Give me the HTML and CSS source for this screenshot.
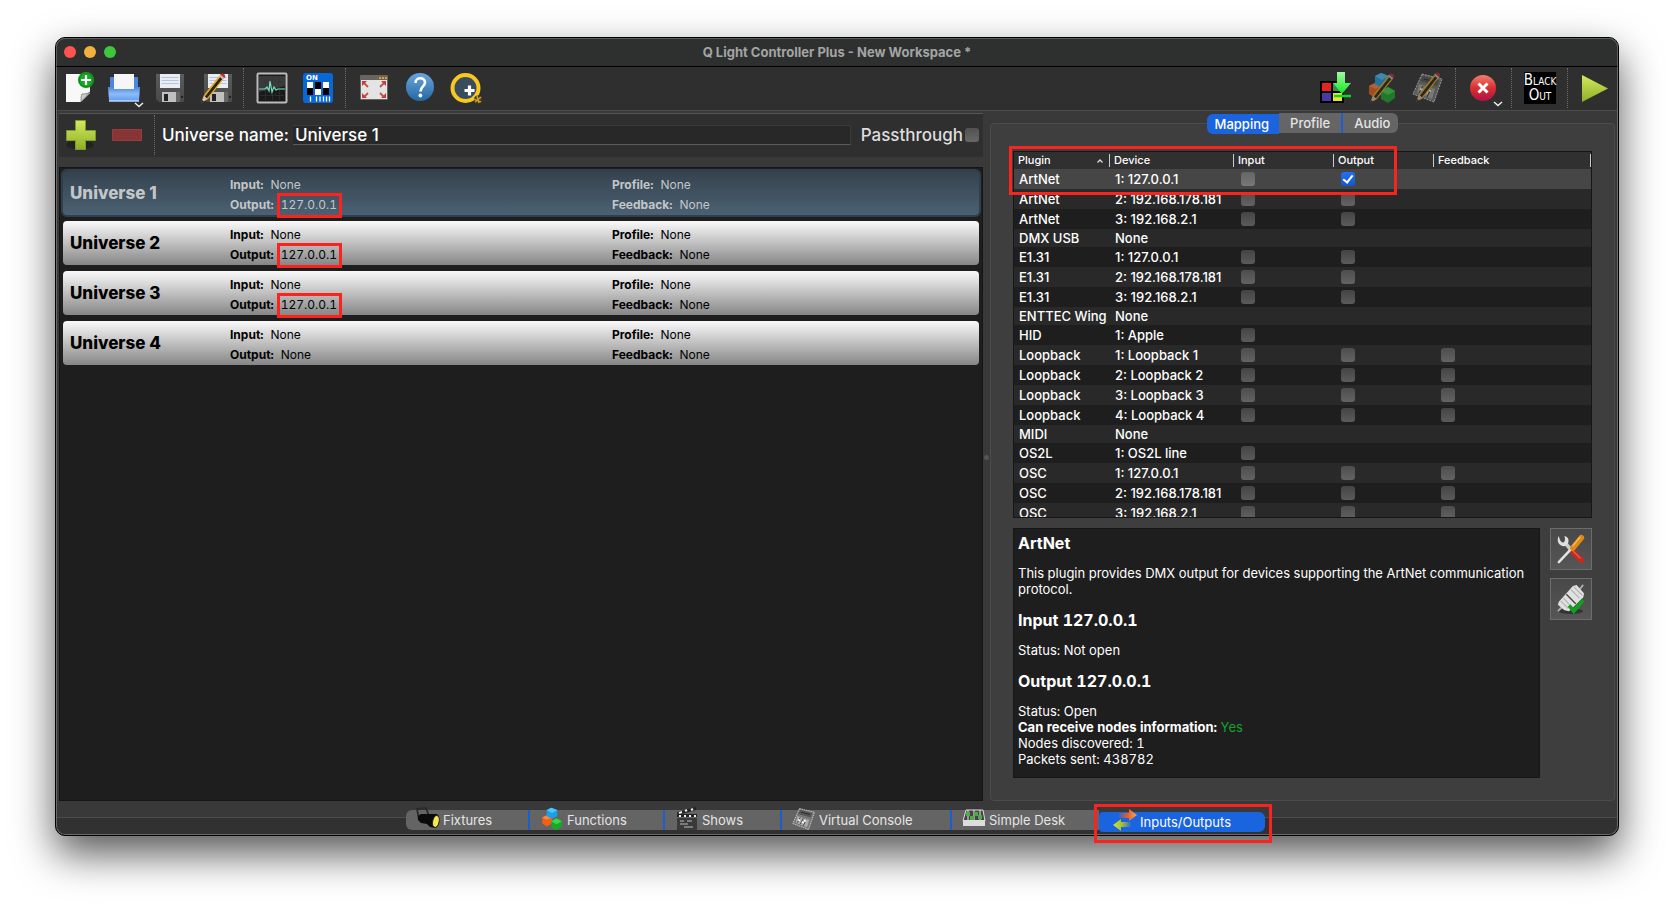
FILE: index.html
```html
<!DOCTYPE html>
<html lang="en">
<head>
<meta charset="utf-8">
<title>Q Light Controller Plus - New Workspace *</title>
<link rel="stylesheet" href="styles.css">
</head>
<body>
<svg class="defs" width="0" height="0" aria-hidden="true">
  <defs>
    <linearGradient id="gBlue" x2="0" y2="1"><stop offset="0" stop-color="#4a86dc"/><stop offset=".5" stop-color="#8ebcf8"/><stop offset="1" stop-color="#5e9cf0"/></linearGradient>
    <linearGradient id="gGray" x2="0" y2="1"><stop offset="0" stop-color="#5c5c5c"/><stop offset="1" stop-color="#484848"/></linearGradient>
    <linearGradient id="gHelp" x2="0" y2="1"><stop offset="0" stop-color="#6aa6dc"/><stop offset="1" stop-color="#2468a4"/></linearGradient>
    <linearGradient id="gLime" x2="0" y2="1"><stop offset="0" stop-color="#d4e85c"/><stop offset="1" stop-color="#8cb02a"/></linearGradient>
    <linearGradient id="gRed" x2="0" y2="1"><stop offset="0" stop-color="#f08070"/><stop offset=".5" stop-color="#d83030"/><stop offset="1" stop-color="#b01048"/></linearGradient>
    <linearGradient id="gArrow" x2="0" y2="1"><stop offset="0" stop-color="#a0f8a0"/><stop offset="1" stop-color="#10e820"/></linearGradient>
    <linearGradient id="gOrange"><stop offset="0" stop-color="#e85a20" stop-opacity=".2"/><stop offset=".5" stop-color="#e86028"/><stop offset="1" stop-color="#f0a860"/></linearGradient>
    <linearGradient id="gGreen"><stop offset="0" stop-color="#d0e040"/><stop offset=".5" stop-color="#a8c030"/><stop offset="1" stop-color="#a8c030" stop-opacity=".1"/></linearGradient>
    <g id="floppy">
      <path d="M1 1h28v28H4l-3-3z" fill="url(#gGray)"/><path d="M5 1h20v14H5z" fill="#e8edf4"/>
      <path d="M6.500 4.500h17M6.500 7.500h17M6.500 10.500h17" stroke="#b4c4dc"/>
      <path d="M7 19h14v10H7z" fill="#c0c0c0"/><path d="M9 21h4v7H9z" fill="#222"/><path d="M21 19h4v10h-4z" fill="#666"/><path d="M26 23h2v2h-2z" fill="#222"/>
    </g>
    <g id="pencil">
      <path d="M1 30l3-8 4 4z" fill="#e0c090"/><path d="M1 30l1-3 2 1.500z" fill="#222"/>
      <path d="M4 22L19 3l4 4L8 26z" fill="#e8a818"/><path d="M5.500 23.500l15-19 1.300 1.300-15 19z" fill="#222" stroke="#222"/>
      <path d="M19 3l1-1.500 4.500 3.500-1.500 2z" fill="#bbb"/><path d="M20 1.500C22-1 27 2 24.500 5z" fill="#c82828"/>
    </g>
    <g id="hexes">
      <path d="M8 11l7 3v8l-7 4-6-4v-8z" fill="#f06018"/><path d="M8 11l7 3-7 3-6-3z" fill="#fc8840"/>
      <path d="M21 15l7 4v7l-7 5-7-4v-8z" fill="#18a828"/><path d="M21 15l7 4-7 4-7-4z" fill="#38d848"/>
      <path d="M14 1l8 3v8l-7 4-7-4V4z" fill="#18a0e8"/><path d="M14 1l8 3-7 4-7-4z" fill="#50c4fc"/>
    </g>
    <g id="desk">
      <path d="M10 2l20 5-8 23-21-8z" fill="#777" stroke="#ddd" stroke-dasharray="2 1"/>
      <path d="M11 4l16 4-2 6L8 9z" fill="#555"/><path d="M7 12l16 5-3 10-15-6z" fill="#aaa"/>
      <path d="M11 14l-4 7M15 15l-4 8M19 17l-4 8M12 7l12 3" stroke="#222"/><path d="M8 17l3 1M13 20l3 1M16 18l3 1" stroke="#fff" stroke-width="2"/>
    </g>
  </defs>
</svg>

<main class="window">
  <header class="titlebar">
    <div class="lights"><button class="light red" aria-label="Close"></button><button class="light amber" aria-label="Minimize"></button><button class="light green" aria-label="Zoom"></button></div>
    <h1 class="title">Q Light Controller Plus - New Workspace *</h1>
  </header>

  <nav class="toolbar" aria-label="Main toolbar">
    <button class="tool" aria-label="New"><svg viewBox="0 0 32 32"><path d="M4 2h24v19l-9 9H4z" fill="#f8f8f8"/><path d="M28 20l-9 10c0-4 0-6 1-8 2 0 5 0 8-2z" fill="#ccc" stroke="#555" stroke-width=".6"/><circle cx="24" cy="8" r="8" fill="#18a828"/><circle cx="24" cy="8" r="7" fill="none" stroke="#0c8418"/><path d="M24 3v10M19 8h10" stroke="#fff" stroke-width="2.200"/></svg></button>
    <button class="tool" aria-label="Open"><svg viewBox="0 0 32 32"><path d="M2 5h28v14H2z" fill="#4a86dc"/><path d="M6 2h20v16H6z" fill="#f6f6f6"/><path d="M0 15h4l2 2h20l2-2h4l-1 14H1z" fill="url(#gBlue)"/><path d="M1 29h30" stroke="#bcd8ff" stroke-width="1.500"/><path d="M27 31l4 3.500 4-3.500" stroke="#eee" fill="none" stroke-width="1.500"/></svg></button>
    <button class="tool" aria-label="Save"><svg viewBox="0 0 32 32"><use href="#floppy" x="1" y="1"/></svg></button>
    <button class="tool" aria-label="Save as"><svg viewBox="0 0 32 32"><use href="#floppy" x="3" y="1"/><use href="#pencil" y="1"/></svg></button>
    <span class="sep"></span>
    <button class="tool" aria-label="Monitor"><svg viewBox="0 0 32 32"><rect x="1.500" y="1.500" width="29" height="29" rx="1" fill="#1a1a1a" stroke="#bbb" stroke-width="2"/><path d="M3 4h26v10L3 20z" fill="#3a3a3a"/><path d="M4 9.500h24M4 16.500h24M4 23.500h24M9.500 4v24M16.500 4v24M23.500 4v24" stroke="#2c3a36" stroke-width=".6"/><path d="M3 17h6l2-2 2 4 1-10 2 11 2-5 2 3 2-1h7" fill="none" stroke="#78dcc0" stroke-width="1.200"/></svg></button>
    <button class="tool" aria-label="DMX address tool"><svg viewBox="0 0 32 32"><rect x="1" y="1" width="30" height="30" rx="3" fill="#0868d8"/><text x="4" y="8" class="dip">ON</text><path d="M5 10h6v13H5zM13 10h6v13h-6zM21 10h6v13h-6z" fill="#fff"/><path d="M5 16h6v7H5zM13 10h6v7h-6zM21 16h6v7h-6z" fill="#000"/><path d="M8.500 24.500v5M14.500 24.500v5M18 24.500v5M21.500 24.500v5M24.500 24.500v5M27.500 24.500v5" stroke="#fff" stroke-width="1.300"/></svg></button>
    <span class="sep"></span>
    <button class="tool" aria-label="Full screen"><svg viewBox="0 0 32 32"><rect x="2" y="3" width="28" height="25" rx="1" fill="#6a6460"/><path d="M3 8h26v19H3z" fill="#e4e4e4"/><path d="M21 6h2M24 6h2M27 6h2" stroke="#e0a030" stroke-width="2"/><g stroke="#c85050" stroke-width="1.800"><path d="M10 15L6 11M22 15l4-4M10 21l-4 4M22 21l4 4"/></g><g fill="#c04040"><path d="M4 9h5l-5 5zM28 9h-5l5 5zM4 26h5l-5-5zM28 26h-5l5-5z"/></g></svg></button>
    <button class="tool" aria-label="Help"><svg viewBox="0 0 32 32"><circle cx="16" cy="15" r="14" fill="url(#gHelp)"/><path d="M11.500 11C11.500 4.500 21 5 21 10.500c0 4-4.500 4-4.500 9" fill="none" stroke="#fff" stroke-width="2.600"/><circle cx="16.400" cy="23.500" r="1.900" fill="#fff"/></svg></button>
    <button class="tool" aria-label="About QLC+"><svg viewBox="0 0 32 32"><circle cx="15.500" cy="16" r="13" fill="#384c5c" stroke="#f8c820" stroke-width="4"/><path d="M19.500 13.500v10M14.500 18.500h10" stroke="#fff" stroke-width="3.200"/><circle cx="28" cy="27.500" r="4" fill="#4a4228"/><path d="M24 27l7 3M25 30l6-5M27 24l2 7" stroke="#d0a828" stroke-width="1.300"/></svg></button>
    <span class="spacer"></span>
    <button class="tool" aria-label="Dump DMX values"><svg viewBox="0 0 32 32"><path d="M0 9h24v22H0z" fill="#000"/><path d="M2 11h9v8H2z" fill="#e82020"/><path d="M13 11h9v8h-9z" fill="#3a9040"/><path d="M2 21h9v8H2z" fill="#4838a8"/><path d="M13 21h9v8h-9z" fill="#f0e030"/><path d="M17 0h8v11h6l-9 11-9-11h4z" fill="url(#gArrow)"/><path d="M14 24h17" stroke="#10d820" stroke-width="2.500"/></svg></button>
    <button class="tool dim" aria-label="Function wizard"><svg viewBox="0 0 32 32"><use href="#hexes" x="1"/><use href="#pencil" x="3" y="1"/></svg></button>
    <button class="tool dim" aria-label="Live edit virtual console"><svg viewBox="0 0 32 32"><use href="#desk"/><use href="#pencil" x="3"/></svg></button>
    <span class="sep"></span>
    <button class="tool" aria-label="Stop all functions"><svg viewBox="0 0 32 32"><circle cx="15" cy="16" r="13" fill="url(#gRed)"/><path d="M10.500 11.500l9 9M19.500 11.500l-9 9" stroke="#fff" stroke-width="3"/><path d="M26 30l4 3.500 4-3.500" stroke="#eee" fill="none" stroke-width="1.500"/></svg></button>
    <span class="sep"></span>
    <button class="tool" aria-label="Blackout"><svg viewBox="0 0 32 32"><rect width="32" height="32" fill="#000"/><text x="16" y="13" class="bo">B<tspan class="sc">LACK</tspan></text><text x="16" y="28" class="bo">O<tspan class="sc">UT</tspan></text></svg></button>
    <span class="sep"></span>
    <button class="tool" aria-label="Operate"><svg viewBox="0 0 32 32"><path d="M2 3l26 13.500L2 30z" fill="url(#gLime)"/></svg></button>
  </nav>

  <div class="content">
    <section class="left" aria-label="Universes">
      <div class="unibar">
        <button class="tool" aria-label="Add universe"><svg viewBox="0 0 32 32"><ellipse cx="15" cy="26" rx="14" ry="4" fill="#222"/><path d="M10.500 1.500h10v10h10v10h-10v9h-10v-9h-9v-10h9z" fill="url(#gLime)" stroke="#7c9c28"/></svg></button>
        <button class="tool" aria-label="Remove universe"><svg viewBox="0 0 32 32"><path d="M1.500 10.500h29v11h-29z" fill="#883434" stroke="#963c3c"/></svg></button>
        <span class="sep"></span>
        <label class="uname" for="uname">Universe name:</label>
        <input class="ufield" id="uname" type="text" value="Universe 1">
        <label class="pass" for="pass">Passthrough</label>
        <input class="check" id="pass" type="checkbox">
      </div>
      <div class="unilist">
        <article class="uni selected"><h2>Universe 1</h2>
          <dl><div><dt>Input:</dt><dd>None</dd></div><div><dt>Output:</dt><dd class="marked">127.0.0.1</dd></div></dl>
          <dl><div><dt>Profile:</dt><dd>None</dd></div><div><dt>Feedback:</dt><dd>None</dd></div></dl></article>
        <article class="uni"><h2>Universe 2</h2>
          <dl><div><dt>Input:</dt><dd>None</dd></div><div><dt>Output:</dt><dd class="marked">127.0.0.1</dd></div></dl>
          <dl><div><dt>Profile:</dt><dd>None</dd></div><div><dt>Feedback:</dt><dd>None</dd></div></dl></article>
        <article class="uni"><h2>Universe 3</h2>
          <dl><div><dt>Input:</dt><dd>None</dd></div><div><dt>Output:</dt><dd class="marked">127.0.0.1</dd></div></dl>
          <dl><div><dt>Profile:</dt><dd>None</dd></div><div><dt>Feedback:</dt><dd>None</dd></div></dl></article>
        <article class="uni"><h2>Universe 4</h2>
          <dl><div><dt>Input:</dt><dd>None</dd></div><div><dt>Output:</dt><dd>None</dd></div></dl>
          <dl><div><dt>Profile:</dt><dd>None</dd></div><div><dt>Feedback:</dt><dd>None</dd></div></dl></article>
      </div>
    </section>

    <div class="splitter"></div>

    <section class="group" aria-label="Patch">
      <div class="tabs"><button class="tab on">Mapping</button><button class="tab">Profile</button><button class="tab last">Audio</button></div>
      <div class="mapping">
        <div class="tablewrap">
        <div class="tableclip">
          <table class="map">
            <colgroup><col class="c1"><col class="c2"><col class="c3"><col class="c3"><col></colgroup>
            <thead><tr><th class="sorted">Plugin<svg viewBox="0 0 8 6"><path d="M1.500 4.500L4 2l2.500 2.500" fill="none" stroke="#ddd" stroke-width="1.300"/></svg></th><th>Device</th><th>Input</th><th>Output</th><th>Feedback</th></tr></thead>
            <tbody>
              <tr class="sel"><td>ArtNet</td><td>1: 127.0.0.1</td><td><input class="check" type="checkbox" aria-label="Input"></td><td><input class="check" type="checkbox" aria-label="Output" checked></td><td></td></tr>
              <tr><td>ArtNet</td><td>2: 192.168.178.181</td><td><input class="check" type="checkbox" aria-label="Input"></td><td><input class="check" type="checkbox" aria-label="Output"></td><td></td></tr>
              <tr><td>ArtNet</td><td>3: 192.168.2.1</td><td><input class="check" type="checkbox" aria-label="Input"></td><td><input class="check" type="checkbox" aria-label="Output"></td><td></td></tr>
              <tr class="short"><td>DMX USB</td><td>None</td><td></td><td></td><td></td></tr>
              <tr><td>E1.31</td><td>1: 127.0.0.1</td><td><input class="check" type="checkbox" aria-label="Input"></td><td><input class="check" type="checkbox" aria-label="Output"></td><td></td></tr>
              <tr><td>E1.31</td><td>2: 192.168.178.181</td><td><input class="check" type="checkbox" aria-label="Input"></td><td><input class="check" type="checkbox" aria-label="Output"></td><td></td></tr>
              <tr><td>E1.31</td><td>3: 192.168.2.1</td><td><input class="check" type="checkbox" aria-label="Input"></td><td><input class="check" type="checkbox" aria-label="Output"></td><td></td></tr>
              <tr class="short"><td>ENTTEC Wing</td><td>None</td><td></td><td></td><td></td></tr>
              <tr><td>HID</td><td>1: Apple</td><td><input class="check" type="checkbox" aria-label="Input"></td><td></td><td></td></tr>
              <tr><td>Loopback</td><td>1: Loopback 1</td><td><input class="check" type="checkbox" aria-label="Input"></td><td><input class="check" type="checkbox" aria-label="Output"></td><td><input class="check" type="checkbox" aria-label="Feedback"></td></tr>
              <tr><td>Loopback</td><td>2: Loopback 2</td><td><input class="check" type="checkbox" aria-label="Input"></td><td><input class="check" type="checkbox" aria-label="Output"></td><td><input class="check" type="checkbox" aria-label="Feedback"></td></tr>
              <tr><td>Loopback</td><td>3: Loopback 3</td><td><input class="check" type="checkbox" aria-label="Input"></td><td><input class="check" type="checkbox" aria-label="Output"></td><td><input class="check" type="checkbox" aria-label="Feedback"></td></tr>
              <tr><td>Loopback</td><td>4: Loopback 4</td><td><input class="check" type="checkbox" aria-label="Input"></td><td><input class="check" type="checkbox" aria-label="Output"></td><td><input class="check" type="checkbox" aria-label="Feedback"></td></tr>
              <tr class="short"><td>MIDI</td><td>None</td><td></td><td></td><td></td></tr>
              <tr><td>OS2L</td><td>1: OS2L line</td><td><input class="check" type="checkbox" aria-label="Input"></td><td></td><td></td></tr>
              <tr><td>OSC</td><td>1: 127.0.0.1</td><td><input class="check" type="checkbox" aria-label="Input"></td><td><input class="check" type="checkbox" aria-label="Output"></td><td><input class="check" type="checkbox" aria-label="Feedback"></td></tr>
              <tr><td>OSC</td><td>2: 192.168.178.181</td><td><input class="check" type="checkbox" aria-label="Input"></td><td><input class="check" type="checkbox" aria-label="Output"></td><td><input class="check" type="checkbox" aria-label="Feedback"></td></tr>
              <tr><td>OSC</td><td>3: 192.168.2.1</td><td><input class="check" type="checkbox" aria-label="Input"></td><td><input class="check" type="checkbox" aria-label="Output"></td><td><input class="check" type="checkbox" aria-label="Feedback"></td></tr>
            </tbody>
          </table>
        </div>
        </div>
        <div class="lower">
          <div class="info">
            <h3>ArtNet</h3>
            <p>This plugin provides DMX output for devices supporting the ArtNet communication protocol.</p>
            <h3>Input 127.0.0.1</h3>
            <p>Status: Not open</p>
            <h3>Output 127.0.0.1</h3>
            <p>Status: Open<br><b>Can receive nodes information:</b> <span class="yes">Yes</span><br>Nodes discovered: 1<br>Packets sent: 438782</p>
          </div>
          <div class="side">
            <button class="square" aria-label="Configure"><svg viewBox="0 0 32 32"><path d="M11 11l6 7" stroke="#ccc" stroke-width="4"/><path d="M17 18l10 10" stroke="#c82820" stroke-width="6" stroke-linecap="round"/><path d="M17 17l9 9" stroke="#e86050" stroke-width="1.500"/><path d="M3 2c-3 5 0 11 6 11 4-1 5-5 4-8-1-2-3-3-4-3 1 3 1 6-1 7-3 0-4-3-5-7z" fill="#e0e0e0"/><path d="M3 30L18 14" stroke="#e4e4e4" stroke-width="2.600" stroke-linecap="round"/><path d="M18 15L27 4" stroke="#e08818" stroke-width="6" stroke-linecap="round"/><path d="M17.500 13L26 3" stroke="#f8b850" stroke-width="1.500"/></svg></button>
            <button class="square" aria-label="Hotplug"><svg viewBox="0 0 32 32"><ellipse cx="16" cy="29" rx="13" ry="3" fill="#333"/><path d="M2 29l5-5M25 6l4-5" stroke="#aaa" stroke-width="2"/><path d="M3 19L18 2l4-1 8 9-1 4-15 15-5-1-7-6z" fill="#e0e0e0"/><path d="M5 18l8 8M8 15l8 9M16 6l9 9M19 3l9 9" stroke="#b0b0b0" stroke-width="1.200"/><path d="M11 11l10 10" stroke="#444" stroke-width="1.500"/><path d="M14 23l5 6 10-12" fill="none" stroke="#10a020" stroke-width="4"/></svg></button>
          </div>
        </div>
      </div>
    </section>
  </div>

  <nav class="bottombar" aria-label="Views">
    <button class="view w1"><svg viewBox="0 0 24 24"><path d="M3 13L1 2l9-1 3 8" fill="none" stroke="#2a2a2a" stroke-width="1.800"/><path d="M2 9l3-2 16 0 2 2-3 12-6-1-3-3-6-1-3-3z" fill="#0a0a0a"/><ellipse cx="20" cy="14.500" rx="3.200" ry="6" fill="#f8e850" stroke="#222" transform="rotate(12 20 14)"/></svg>Fixtures</button>
    <button class="view w2"><svg viewBox="0 0 30 32"><use href="#hexes"/></svg>Functions</button>
    <button class="view w3"><svg viewBox="0 0 24 24"><path d="M2 11h20v12H2z" fill="#3a3a3a"/><path d="M2 7h20v3H2z" fill="#222"/><path d="M2 5L21 0v3L3 8z" fill="#222"/><path d="M4 9h2M9 9h2M14 9h2M19 9h2M4 6l3-1M10 4l2-1M16 3l2-1" stroke="#eee" stroke-width="2"/><path d="M5 14h4M12 14h5M5 17h8M9 20h9" stroke="#bbb"/></svg>Shows</button>
    <button class="view w4"><svg viewBox="0 0 32 32"><use href="#desk"/></svg>Virtual Console</button>
    <button class="view w5"><svg viewBox="0 0 24 24"><path d="M4 3h17l2 11H1z" fill="#444" stroke="#ddd"/><path d="M1 13h22v6H1z" fill="#ddd"/><path d="M6 3v10M12 3v10M18 3v10" stroke="#eee"/><path d="M4 5h4v4H4zM8 9h4v4H8zM12 5h4v4h-4zM16 8h4v4h-4z" fill="#50a848"/></svg>Simple Desk</button>
    <button class="view w6 on"><svg viewBox="0 0 24 24"><path d="M6 4h10V0l8 6-8 6V9H6z" fill="url(#gOrange)"/><path d="M18 13H8v-3l-8 6 8 6v-4h10z" fill="url(#gGreen)"/></svg>Inputs/Outputs</button>
  </nav>
</main>
</body>
</html>
```

FILE: styles.css
```css
*, *::before, *::after { box-sizing: border-box; }
body {
  margin: 0;
  height: 100vh;
  padding: 37px 55px 73px;
  display: flex;
  background: #fff;
  font: 500 12px/16px Inter, "Liberation Sans", sans-serif;
  color: #fff;
}
button { font: inherit; color: inherit; border: 0; padding: 0; background: none; }
h1, h2, h3, p, dl, dd { margin: 0; }
.defs { position: absolute; }

.window {
  flex: 1;
  min-width: 0;
  display: flex;
  flex-direction: column;
  border: 1px solid #000;
  border-radius: 10px;
  background: #393939;
  box-shadow: inset 0 0 0 1px #6a6a6a, 0 18px 40px rgba(0, 0, 0, .66);
}

.titlebar {
  display: grid;
  grid-template-columns: 1fr auto 1fr;
  align-items: center;
  height: 29px;
  padding-bottom: 2px;
  border: solid #5c5e5d;
  border-width: 1px 1px 0;
  border-bottom: 1px solid #000;
  border-radius: 9px 9px 0 0;
  background: #2e302f;
}
.lights { display: flex; gap: 8px; padding-left: 7px; }
.light { width: 12px; height: 12px; border-radius: 50%; }
.red { background: #ff5350; }
.amber { background: #f4b03e; }
.green { background: #3ec63e; }
.title { font-size: 13px; font-weight: 700; color: #a3a4a4; }

.toolbar, .unibar { display: flex; align-items: center; gap: 2px; padding-bottom: 1px; background: #2f2f2f; }
.toolbar { height: 44px; margin: 0 1px; border-bottom: 1px solid #4c4c4c; }
.tool { display: grid; place-items: center; flex: 0 0 44px; height: 32px; }
.toolbar .tool:first-child { margin-left: -1px; }
.toolbar .tool:last-child { margin-right: -1px; }
.tool svg { width: 32px; height: 32px; overflow: visible; }
.dim svg { opacity: .6; }
.sep { flex: 0 0 8px; height: 40px; padding-left: 3px; }
.sep::before { content: ""; display: block; height: 100%; border-left: 1px dotted #6c6c6c; }
.spacer { flex: 1; }
.dip { font: 700 7px "DejaVu Sans", sans-serif; fill: #fff; }
.bo { font: 15px "DejaVu Sans Condensed", "Liberation Sans Narrow", sans-serif; fill: #fff; text-anchor: middle; }
.sc { font-size: 10px; }

.content {
  flex: 1;
  min-height: 0;
  display: grid;
  grid-template-columns: minmax(0, 924fr) 7px minmax(0, 625fr);
  grid-template-rows: minmax(0, 1fr);
  padding: 2px 3px 0;
}
.left { display: flex; flex-direction: column; }
.unibar { height: 44px; border-top: 1px solid #555; padding-right: 4px; }
.uname, .pass { font-size: 17px; line-height: 20px; white-space: nowrap; }
.uname { margin-left: 1px; }
.pass { margin-left: 8px; color: #dedede; }
.ufield {
  flex: 1;
  min-width: 0;
  height: 20px;
  margin-left: 2px;
  padding: 0 2px;
  border: 1px solid #3a3a3a;
  border-bottom-color: #5c5c5c;
  border-left: 0;
  background: #282828;
  color: #fff;
  font: 500 17px/18px Inter, sans-serif;
}
.check {
  appearance: none;
  flex: none;
  display: block;
  width: 14px;
  height: 14px;
  margin: 0;
  border-radius: 3px;
  background: linear-gradient(rgba(255, 255, 255, .17), rgba(255, 255, 255, .27));
}
.check:checked {
  background: #1a64e0 linear-gradient(#2470ee, #1458d0);
}
.check:checked::before {
  content: "";
  display: block;
  width: 6px;
  height: 10px;
  margin: 1px 0 0 4px;
  border: solid #fff;
  border-width: 0 2px 2px 0;
  transform: rotate(38deg);
}

.unilist {
  flex: 1;
  min-height: 0;
  margin-top: 10px;
  padding-top: 1px;
  border: 1px solid #151515;
  background: #1e1e1e;
}
.uni {
  display: grid;
  grid-template-columns: 160px 382fr 367fr;
  align-items: start;
  height: 44px;
  margin: 0 3px 6px;
  padding-left: 7px;
  border-radius: 4px;
  background: linear-gradient(#fafafa, #868686);
  color: #000;
}
.uni:first-child { margin-top: 2px; }
.uni.selected {
  background: linear-gradient(#35424d, #4b6173);
  box-shadow: 0 0 0 2px #303f4c;
  color: #c3c6c8;
}
.uni h2 { margin-top: 12px; font-size: 17px; line-height: 20px; font-weight: 800; }
.uni dl { padding-top: 4px; line-height: 20px; font-variant-numeric: tabular-nums; }
.uni dl div { display: flex; gap: 7px; }
.uni dt { font-weight: 700; }
.uni dd { font-weight: 400; position: relative; }
.marked::after {
  content: "";
  position: absolute;
  inset: -2px -5px -3px -4px;
  border: 3px solid #fb231d;
}

.splitter { display: grid; place-items: center; }
.splitter::before { content: ""; width: 5px; height: 5px; border-radius: 50%; background: #555; }

.group {
  display: flex;
  flex-direction: column;
  margin-top: 10px;
  padding: 0 22px;
  border: 1px solid #4c4c4c;
  border-radius: 4px;
  background: #3e3e3e;
}
.tabs { display: flex; align-self: center; height: 20px; margin-top: -11px; }
.tab { padding: 0 11px; background: #656565; font-size: 13px; line-height: 20px; color: #e4e4e4; }
.tab.on { margin-top: 1px; margin-bottom: -1px; padding: 0 10px 0 8px; border-radius: 6px 0 0 6px; background: #1a64e0; color: #fff; }
.tab.last { padding: 0 8px 0 11px; border-left: 2px solid #1a5fd0; border-radius: 0 6px 6px 0; }
.mapping { flex: 1; min-height: 0; display: flex; flex-direction: column; gap: 10px; padding: 18px 0 22px; }
.tablewrap { position: relative; flex: 368 1 0; min-height: 0; }
.tableclip { height: 100%; overflow: hidden; border: 1px solid #161616; background: #1e1e1e; }
.tablewrap::after {
  content: "";
  position: absolute;
  left: -4px;
  top: -5px;
  width: 388px;
  height: 49px;
  border: 3px solid #fb231d;
}
.map { width: 100%; border-collapse: collapse; table-layout: fixed; font-size: 13px; font-weight: 500; }
.c1 { width: 96px; }
.c2 { width: 124px; }
.c3 { width: 100px; }
.map th {
  height: 17px;
  padding: 0 4px;
  text-align: left;
  font-size: 11px;
  line-height: 17px;
  font-weight: 500;
  background: linear-gradient(#ccc, #ccc) right center / 1px 13px no-repeat #303030;
}
.map th svg { float: right; width: 8px; height: 6px; margin: 6px 2px 0 0; }
.map td { height: 20px; padding: 0 0 0 5px; line-height: 18px; white-space: nowrap; }
.map td .check { margin-left: 2px; }
.map .short td { height: 18px; }
.map tbody tr:nth-child(even) { background: #292929; }
.map tbody .sel { background: #464646; }

.lower { flex: 250 1 0; min-height: 0; display: flex; gap: 10px; }
.info {
  flex: 1;
  padding: 4px;
  border: 1px solid #161616;
  background: #1e1e1e;
  overflow: hidden;
  font-size: 13px;
  font-weight: 400;
  font-variant-numeric: tabular-nums;
}
.info h3 { font-size: 16px; line-height: 20px; font-weight: 700; margin-bottom: 12px; }
.info p { margin-bottom: 13px; }
.info b { font-weight: 700; }
.yes { color: #12a32c; }
.side { display: flex; flex-direction: column; gap: 8px; }
.square {
  display: grid;
  place-items: center;
  width: 42px;
  height: 42px;
  border: 1px solid #6c6c6c;
  background: linear-gradient(#484848, #565656);
}
.square svg { width: 30px; height: 30px; }

.bottombar {
  display: flex;
  justify-content: center;
  align-items: flex-start;
  height: 33px;
  margin: 0 1px 1px;
  padding: 9px 3px 0 0;
  border-radius: 0 0 9px 9px;
  background: linear-gradient(#393939 16px, #4c4c4c 16px, #4c4c4c 17px, #313131 17px);
}
.view {
  display: flex;
  align-items: center;
  gap: 3px;
  height: 20px;
  padding-left: 10px;
  border-left: 2px solid #1a5fd0;
  background: #646464;
  color: #e4e4e4;
  font-size: 13px;
  font-weight: 400;
  line-height: 20px;
}
.view svg { width: 24px; height: 24px; margin-top: -2px; }
.w1 { width: 122px; border-left: 0; border-radius: 6px 0 0 6px; }
.w2 { width: 135px; }
.w3 { width: 117px; }
.w4 { width: 170px; }
.w5 { width: 149px; }
.w6 { width: 166px; }
.view.on { position: relative; margin-top: 2px; padding-left: 14px; border: 0; border-radius: 4px 6px 6px 4px; background: #1a64e0; color: #fff; }
.view.on::after {
  content: "";
  position: absolute;
  inset: -8px -7px -11px -5px;
  border: 3px solid #fb231d;
}
```
